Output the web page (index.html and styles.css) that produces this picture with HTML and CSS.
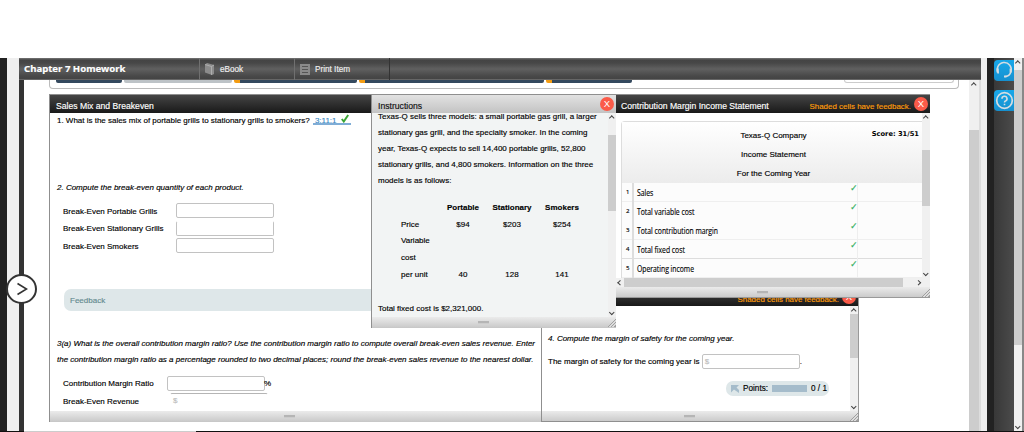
FILE: index.html
```html
<!DOCTYPE html>
<html>
<head>
    <meta charset="utf-8">
    <title>Chapter 7 Homework</title>
    <link rel="stylesheet" href="styles.css">
</head>
<body>
    <div class="page">
        <div class="edge"></div>
        <div class="gutter"></div>

        <div class="app">
            <div class="toolbar">
                <div class="tool-title">Chapter 7 Homework</div>
                <div class="tool">
                    <svg width="10" height="12" viewBox="0 0 10 12"><path d="M0 1.5L2 0l7 2v9L7 12 0 9.500z" fill="#8c8c8c"/><path d="M0 1.500l6.500 2V12M6.500 3.500L9 2" fill="none" stroke="#bbb" stroke-width=".7"/></svg>
                    <span>eBook</span>
                </div>
                <div class="tool">
                    <svg width="10" height="11" viewBox="0 0 10 11"><path d="M0 0h10v11H0z" fill="#8a8a8a"/><path d="M2 2.500h6M2 5.500h6M2 8.500h6" stroke="#555" stroke-width="1"/></svg>
                    <span>Print Item</span>
                </div>
            </div>

            <div class="app-body">
                <div class="content">
                    <div class="tab-panel">
                        <div class="tabs">
                            <i class="tab first"></i><i class="tab grey"></i>
                            <i class="tab t3"></i><i class="tab t4"></i><i class="tab t5"></i>
                            <i class="tab-box"></i>
                        </div>
                    </div>
                    <div class="bottom-bar"></div>
                </div>
                <div class="scroll main-scroll"><b class="up"></b><i></i></div>
                <div class="scroll-edge"></div>
            </div>
        </div>

        <div class="gutter right"></div>
        <div class="edge right"></div>
        <div class="side">
            <div class="side-btn">
                <svg width="20" height="20" viewBox="0 0 20 20" fill="none" stroke="#d5dde2" stroke-width="1.500"><path d="M4.500 13.500A7 7 0 1 1 16.800 12q-1 4-5.300 4.500"/><path d="M3.700 8.500v4M16.700 8.500v4" stroke-width="2.200"/><path d="M10 16.500h2.500" stroke-width="2"/></svg>
            </div>
            <div class="side-btn">
                <svg width="20" height="20" viewBox="0 0 20 20" fill="none" stroke="#d5dde2"><circle cx="10.500" cy="10.500" r="7.800" stroke-width="1.700"/><path d="M8 8.800a2.500 2.500 0 1 1 3.500 2.200q-1 .4-1 1.500M10.500 13.800v1.500" stroke-width="1.600"/></svg>
            </div>
        </div>
        <div class="scroll page-scroll"><b class="up"></b><i></i><b class="down"></b></div>
        <div class="page-edge"></div>
    </div>

    <div class="expand">
        <svg width="12" height="14" viewBox="0 0 12 14" fill="none" stroke="#333" stroke-width="1.600"><path d="M1.500 1.500L10.500 7l-9 5.500"/></svg>
    </div>

    <div class="window win-sales">
        <div class="title-bar"><span>Sales Mix and Breakeven</span></div>
        <div class="win-body">
            <div class="sales">
                <p class="q1"><span>1. What is the sales mix of portable grills to stationary grills to smokers?</span>
                    <span class="answer">3:11:1<svg width="8" height="9" viewBox="0 0 8 9"><path d="M.8 5l2 2.500L7.200 1" fill="none" stroke="#3aa535" stroke-width="2"/></svg></span></p>
                <p class="q2"><em>2. Compute the break-even quantity of each product.</em></p>
                <div class="field"><label>Break-Even Portable Grills</label><span class="box"></span></div>
                <div class="field"><label>Break-Even Stationary Grills</label><span class="box no-top"></span></div>
                <div class="field"><label>Break-Even Smokers</label><span class="box"></span></div>
                <div class="feedback">Feedback</div>
                <p class="q3"><em>3(a) What is the overall contribution margin ratio? Use the contribution margin ratio to compute overall break-even sales revenue. Enter</em><br><em>the contribution margin ratio as a percentage rounded to two decimal places; round the break-even sales revenue to the nearest dollar.</em></p>
                <div class="field ratio"><label>Contribution Margin Ratio</label><span class="box"></span><span class="percent">%</span></div>
                <div class="field revenue"><label>Break-Even Revenue</label><span class="box no-side">$</span></div>
            </div>
        </div>
        <div class="win-foot"><i></i></div>
    </div>

    <div class="window win-safety">
        <div class="title-bar"><span class="warn">Shaded cells have feedback.</span><span class="close">X</span></div>
        <div class="win-body">
            <div class="safety">
                <p><em>4. Compute the margin of safety for the coming year.</em></p>
                <p class="safety-line"><span>The margin of safety for the coming year is</span><span class="box">$</span>.</p>
                <div class="points">
                    <svg width="8" height="8" viewBox="0 0 8 8"><path d="M0 0h8L5.500 2.500 8 5v3L3 4.500 0 7.500z" fill="#a5bccb"/></svg>
                    <span>Points:</span><i></i><span>0 / 1</span>
                </div>
            </div>
            <div class="scroll"><b class="up"></b><i></i><b class="down"></b></div>
        </div>
        <div class="win-foot grip"><i></i></div>
    </div>

    <div class="window win-income">
        <div class="title-bar"><span>Contribution Margin Income Statement</span><span class="warn">Shaded cells have feedback.</span><span class="close">X</span></div>
        <div class="win-body">
            <div class="income">
                <div class="sheet">
                    <div class="sheet-head">
                        <p>Texas-Q Company</p>
                        <p>Income Statement</p>
                        <p>For the Coming Year</p>
                        <span class="score">Score: 31/51</span>
                    </div>
                    <div class="row"><span class="num">1</span><span class="name"><span>Sales</span></span><span class="tick">✓</span></div>
                    <div class="row no-line"><span class="num">2</span><span class="name"><span>Total variable cost</span></span><span class="tick">✓</span></div>
                    <div class="row"><span class="num">3</span><span class="name"><span>Total contribution margin</span></span><span class="tick">✓</span></div>
                    <div class="row strong"><span class="num">4</span><span class="name"><span>Total fixed cost</span></span><span class="tick">✓</span></div>
                    <div class="row"><span class="num">5</span><span class="name"><span>Operating income</span></span><span class="tick">✓</span></div>
                </div>
            </div>
            <div class="scroll"><b class="up"></b><i></i><b class="down"></b></div>
        </div>
        <div class="h-scroll"><b class="left"></b><i></i><b class="right"></b></div>
        <div class="win-foot grip"><i></i></div>
    </div>

    <div class="window win-instructions">
        <div class="title-bar light"><span>Instructions</span><span class="close">X</span></div>
        <div class="win-body">
            <div class="instructions">
                <p>Texas-Q sells three models: a small portable gas grill, a larger<br>stationary gas grill, and the specialty smoker. In the coming<br>year, Texas-Q expects to sell 14,400 portable grills, 52,800<br>stationary grills, and 4,800 smokers. Information on the three<br>models is as follows:</p>
                <div class="price-table">
                    <span></span><b>Portable</b><b>Stationary</b><b>Smokers</b>
                    <span>Price</span><span>$94</span><span>$203</span><span>$254</span>
                    <span>Variable</span><span></span><span></span><span></span>
                    <span>cost</span><span></span><span></span><span></span>
                    <span>per unit</span><span>40</span><span>128</span><span>141</span>
                </div>
                <p>Total fixed cost is $2,321,000.</p>
            </div>
            <div class="scroll"><b class="up"></b><i></i><b class="down"></b></div>
        </div>
        <div class="win-foot grip"><i></i></div>
    </div>
</body>
</html>
```
FILE: styles.css
```css
* {
    box-sizing: border-box;
}

body {
    margin: 0;
    width: 1024px;
    height: 432px;
    overflow: hidden;
    position: relative;
    background: #fff;
    color: #000;
    font-family: "Liberation Sans", Arial, sans-serif;
    font-size: 8px;
    -webkit-text-stroke: 0.15px;
}

p {
    margin: 0;
    white-space: nowrap;
}

/* Page frame */
.page {
    display: flex;
    height: 432px;
    padding-top: 58px;
    border-bottom: 1px solid #111;
}

.edge {
    width: 7px;
    background: #222;
}

.gutter {
    width: 12px;
    background: #efefef;
}

.gutter.right {
    width: 6px;
}

.edge.right {
    width: 7px;
}

.app {
    width: 962px;
    display: flex;
    flex-direction: column;
}

.toolbar {
    height: 22px;
    display: flex;
    color: #eee;
    background: linear-gradient(#777 0, #444 2px, #474747 5px, #606060 11px, #484848 18px, #444 21px, #888 22px);
}

.tool-title {
    width: 180px;
    padding-left: 5px;
    font: bold 9.6px/22px "Noto Sans", sans-serif;
    color: #fff;
    white-space: nowrap;
}

.tool {
    width: 95px;
    display: flex;
    align-items: center;
    gap: 5px;
    padding-left: 5px;
    border-left: 1px solid #707070;
    font-size: 8.2px;
}

.tool:last-child {
    width: 96px;
    border-right: 1px solid #333;
}

.app-body {
    flex: 1;
    display: flex;
    border-left: 5px solid #333;
}

.content {
    width: 945px;
    display: flex;
    flex-direction: column;
}

.tab-panel {
    width: 910px;
    height: 9px;
    margin-left: 25px;
    border: 1px solid #bbb;
    border-top: 0;
    border-radius: 0 0 4px 4px;
}

.tabs {
    display: flex;
    padding-left: 6px;
}

.tab {
    height: 3px;
    margin-right: 2px;
    border-radius: 0 0 2px 2px;
    background: #34495e;
    border-left: 6px solid #f39c12;
}

.tab.first {
    width: 66px;
    border-left: 0;
}

.tab.grey {
    width: 108px;
    background: #bdc3c7;
    border-left: 0;
}

.t3 {
    width: 123px;
}

.t4 {
    width: 185px;
}

.t5 {
    width: 86px;
}

.tab-box {
    width: 110px;
    height: 3px;
    margin-left: 210px;
    border: 1px solid #ccc;
    border-top: 0;
    border-radius: 0 0 4px 4px;
}

.bottom-bar {
    width: 172px;
    height: 1px;
    margin-top: auto;
    margin-bottom: -1px;
    background: #ccc;
}

/* Scrollbars */
.scroll {
    width: 8px;
    flex: none;
    display: flex;
    flex-direction: column;
    align-items: center;
    background: #f0f0f0;
}

.scroll i {
    width: 100%;
    background: #cdcdcd;
}

.scroll b,
.h-scroll b {
    width: 3.500px;
    height: 3.500px;
    flex: none;
    border: solid #444;
    border-width: 1px 0 0 1px;
    transform: rotate(45deg);
}

.scroll .down {
    margin-top: auto;
    margin-bottom: 3px;
    transform: rotate(225deg);
}

.scroll .up {
    margin-top: 3px;
    margin-bottom: -.5px;
}

.main-scroll {
    width: 10px;
}

.main-scroll i {
    height: 301px;
    margin-top: 44px;
}

.scroll-edge {
    width: 2px;
    background: #ddd;
}

.page-scroll i {
    height: 275px;
    margin-top: 6px;
}

.page-edge {
    width: 2px;
    background: #888;
}

/* Help column */
.side {
    width: 20px;
    padding-top: 2px;
    background: linear-gradient(90deg, #383838, #4b4b4b);
}

.side-btn {
    height: 21px;
    margin-bottom: 9px;
    margin-left: 0;
    border-radius: 4px 0 0 4px;
    background: linear-gradient(#18a8ea, #1690cf);
}

.expand {
    position: absolute;
    left: 6px;
    top: 274px;
    width: 31px;
    height: 30px;
    display: flex;
    align-items: center;
    justify-content: center;
    border: 2px solid #333;
    border-radius: 50%;
    background: #fff;
}

/* Draggable windows */
.window {
    position: absolute;
    display: flex;
    flex-direction: column;
    background: #fff;
    border-left: 1px solid #8f8f8f;
    border-top: 1px solid #8f8f8f;
}

.title-bar {
    height: 18px;
    flex: none;
    display: flex;
    align-items: center;
    padding-left: 6px;
    padding-top: 4px;
    color: #fff;
    font-size: 8.65px;
    line-height: 10px;
    white-space: nowrap;
    background: linear-gradient(#454545, #191919);
}

.title-bar.light {
    color: #111;
    background: linear-gradient(#e2e2e2, #c3c3c3);
}

.warn {
    margin-left: auto;
    margin-top: 1px;
    font-size: 7.95px;
    color: #ff9d0a;
}

.close {
    width: 14px;
    height: 14px;
    flex: none;
    margin: -5px 2px 0 3px;
    border-radius: 50%;
    color: #fff;
    font-size: 9.5px;
    line-height: 14px;
    text-align: center;
    background: #fb5b49;
    -webkit-text-stroke: 0;
}

.light .close {
    margin-left: auto;
}

.win-body {
    flex: 1;
    min-height: 0;
    display: flex;
    overflow: hidden;
}

.win-foot {
    height: 11px;
    flex: none;
    display: flex;
    align-items: center;
    justify-content: center;
    padding-right: 22px;
    border-bottom: 1px solid #c8c8c8;
    background: linear-gradient(#ebebeb, #cbcbcb);
}

.win-foot i {
    width: 11px;
    height: 3px;
    background: #b5b5b5;
    border-bottom: 1px solid #ccc;
}

.win-foot.grip {
    background: linear-gradient(135deg, transparent 50%, #a0a0a0 50% 57%, #ddd 57% 68%, #a0a0a0 68% 76%, #ddd 76% 86%, #a0a0a0 86%) right bottom / 9px 8px no-repeat, linear-gradient(#ebebeb, #cbcbcb);
}

.win-sales {
    left: 49px;
    top: 94px;
    width: 501px;
    height: 328px;
}

.win-safety {
    left: 541px;
    top: 287px;
    width: 318px;
    height: 135px;
    border-right: 1px solid #999;
}

.win-safety .win-foot {
    border-bottom-color: #8f8f8f;
}

.win-income {
    left: 616px;
    top: 94px;
    width: 314px;
    height: 204px;
    border-left: 0;
}

.win-income .title-bar {
    padding-left: 5px;
}

.win-income .win-foot {
    border-bottom-color: #999;
}

.win-instructions {
    left: 371px;
    top: 94px;
    width: 245px;
    height: 234px;
    background: #f2f4f4;
}

/* Sales mix */
.sales {
    width: 500px;
    flex: none;
    padding-left: 7px;
}

.q1 {
    line-height: 15px;
    letter-spacing: -.01px;
}

.answer {
    display: inline-block;
    height: 12px;
    margin-left: 1px;
    padding: 0 2px;
    color: #3b8ac4;
    line-height: 15px;
    border-bottom: 2px solid #7fadd6;
}

.answer svg {
    margin-left: 5px;
}

.q2 {
    margin: 53px 0 7px;
    line-height: 14px;
}

.field {
    height: 17.5px;
    display: flex;
    align-items: center;
    padding-left: 6px;
}

.field label {
    width: 113px;
    padding-top: 1px;
    white-space: nowrap;
}

.box {
    width: 98px;
    height: 15px;
    padding-left: 2px;
    color: #bbb;
    line-height: 14px;
    background: #fff;
    border: 1px solid #c2c2c2;
    border-radius: 2px;
}

.box.no-top {
    border-top-color: #fff;
}

.box.no-side {
    border-color: #b5b5b5 #fff #fff;
}

.feedback {
    height: 22px;
    margin: 34px 0 24px 7px;
    padding-left: 6px;
    color: #648a8f;
    line-height: 24px;
    border-radius: 7px;
    background: #dee7e9;
}

.q3 {
    margin-bottom: 7px;
    padding-top: 1px;
    line-height: 16px;
}

.ratio label {
    width: 104px;
}

.revenue label {
    width: 107px;
}

.percent {
    margin-left: -1px;
}

/* Margin of safety */
.safety {
    flex: 1;
    padding: 26px 0 0 7px;
    line-height: 14px;
}

.safety p em {
    margin-left: -1px;
}

.safety-line {
    display: flex;
    align-items: center;
    margin-top: 8px;
    margin-left: -1px;
}

.safety-line > span:first-child {
    padding-top: 1px;
}

.safety-line .box {
    margin-left: 2px;
}

.points {
    width: 103px;
    height: 15px;
    display: flex;
    align-items: center;
    gap: 4px;
    margin: 12px 0 0 177px;
    padding-left: 5px;
    font-size: 8.2px;
    border-radius: 7px;
    background: #dee7e9;
}

.points i {
    width: 35px;
    height: 7px;
    background: #a5bccb;
}

.win-safety .scroll i {
    height: 44px;
    margin-top: 2px;
}

/* Income statement */
.income {
    flex: 1;
    padding: 8px 0 0 5px;
}

.sheet {
    border: 1px solid #ddd;
    border-right: 0;
    border-radius: 4px 0 0 0;
    background: #fcfcfc;
}

.sheet-head {
    position: relative;
    height: 61px;
    padding: 4px 0 0 3px;
    text-align: center;
    font-size: 8px;
    line-height: 19px;
    background: linear-gradient(#fff, #ececec);
}

.score {
    position: absolute;
    right: 3px;
    top: 7px;
    font: bold 6.7px/10px "DejaVu Sans", sans-serif;
    -webkit-text-stroke: 0;
}

.row {
    height: 19.1px;
    display: flex;
    border-bottom: 1px solid #efefef;
    font-family: "Open Sans", sans-serif;
    line-height: 19.500px;
}

.row.no-line {
    border-bottom-color: transparent;
}

.row.strong {
    border-bottom-color: #ddd;
}

.num {
    width: 12px;
    height: 19px;
    padding-left: 4px;
    font-size: 6px;
    border-right: 2px solid #ddd;
}

.name {
    width: 216px;
    padding-left: 3px;
    font-size: 8.3px;
}

/* condensed row labels */
.name span {
    display: inline-block;
    transform: scaleX(.82);
    transform-origin: left;
}

.tick {
    width: 8px;
    height: 19px;
    font: bold 9px/10px "DejaVu Sans", sans-serif;
    color: #35b060;
    border-right: 1px solid #eee;
}

.win-income .scroll i {
    height: 56px;
    margin-top: 31px;
}

.h-scroll {
    height: 9px;
    flex: none;
    display: flex;
    align-items: center;
    gap: 2px;
    padding: 0 10px 0 2px;
    background: #f0f0f0;
}

.h-scroll i {
    width: 279px;
    height: 9px;
    background: #cdcdcd;
}

.h-scroll .left {
    transform: rotate(-45deg);
}

.h-scroll .right {
    margin-left: auto;
    transform: rotate(135deg);
}

/* Instructions */
.instructions {
    width: 236px;
    padding-left: 6px;
    margin-top: -4px;
    line-height: 16px;
}

.price-table {
    display: grid;
    grid-template-columns: 37px 50px 48px 52px;
    grid-template-rows: repeat(5, 16.7px);
    margin: 11px 0 18px 23px;
    text-align: center;
    line-height: 16.700px;
}

.price-table span:nth-child(4n+1) {
    text-align: left;
    white-space: nowrap;
}

.win-instructions .scroll i {
    height: 76px;
    margin-top: 16px;
}
```
